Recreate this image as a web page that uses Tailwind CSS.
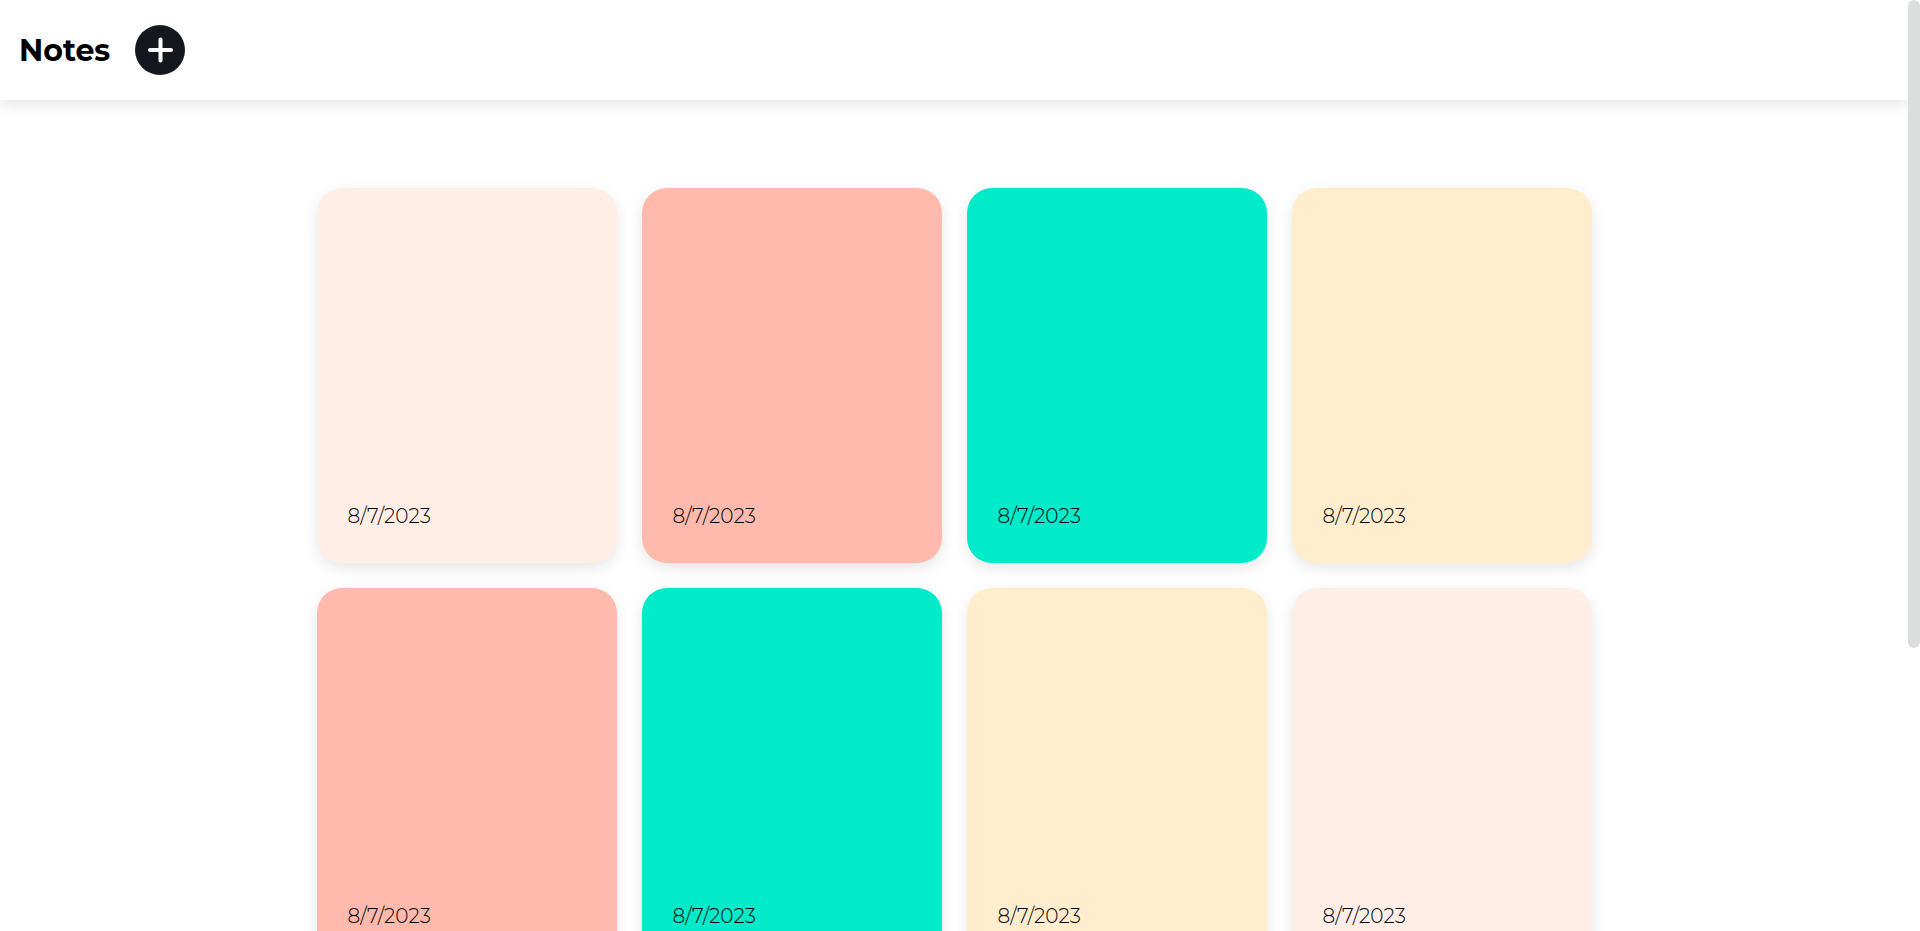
<!DOCTYPE html>
<html lang="en">
<head>
<meta charset="utf-8">
<meta name="viewport" content="width=device-width, initial-scale=1">
<title>Notes</title>
<script src="https://cdn.jsdelivr.net/npm/@tailwindcss/browser@4"></script>
</head>
<body class="flex h-screen overflow-hidden bg-white font-['Montserrat','Inter',sans-serif] text-black">
  <div class="flex min-w-0 flex-1 flex-col overflow-hidden">
    <header class="flex shrink-0 items-center gap-[25px] bg-white px-[19px] py-6 shadow-[0_5px_15px_rgba(0,0,0,0.1)]">
      <h1 class="pt-0.5 text-[30px] leading-[50px] font-bold">Notes</h1>
      <button type="button" aria-label="Add note" class="size-[50px] rounded-full bg-[#15171e]">
        <svg viewBox="0 0 50 50" class="size-full" fill="none" stroke="#fff" stroke-width="4" stroke-linecap="round" aria-hidden="true"><path d="M25.500 14.500V35.500M15 25H36"/></svg>
      </button>
    </header>
    <main class="mx-auto flex w-full max-w-[1400px] flex-wrap justify-center gap-[25px] px-5 pt-[88px]">
      <article class="flex h-[375px] w-[300px] items-end rounded-[25px] bg-[#ffeee6] px-[31px] pb-[35px] shadow-[0_5px_15px_rgba(0,0,0,0.1)]"><time datetime="2023-08-07" class="text-[20px] leading-6 font-light">8/7/2023</time></article>
      <article class="flex h-[375px] w-[300px] items-end rounded-[25px] bg-[#ffb9ad] px-[31px] pb-[35px] shadow-[0_5px_15px_rgba(0,0,0,0.1)]"><time datetime="2023-08-07" class="text-[20px] leading-6 font-light">8/7/2023</time></article>
      <article class="flex h-[375px] w-[300px] items-end rounded-[25px] bg-[#00ebca] px-[31px] pb-[35px] shadow-[0_5px_15px_rgba(0,0,0,0.1)]"><time datetime="2023-08-07" class="text-[20px] leading-6 font-light">8/7/2023</time></article>
      <article class="flex h-[375px] w-[300px] items-end rounded-[25px] bg-[#ffedce] px-[31px] pb-[35px] shadow-[0_5px_15px_rgba(0,0,0,0.1)]"><time datetime="2023-08-07" class="text-[20px] leading-6 font-light">8/7/2023</time></article>
      <article class="flex h-[375px] w-[300px] items-end rounded-[25px] bg-[#ffb9ad] px-[31px] pb-[35px] shadow-[0_5px_15px_rgba(0,0,0,0.1)]"><time datetime="2023-08-07" class="text-[20px] leading-6 font-light">8/7/2023</time></article>
      <article class="flex h-[375px] w-[300px] items-end rounded-[25px] bg-[#00ebca] px-[31px] pb-[35px] shadow-[0_5px_15px_rgba(0,0,0,0.1)]"><time datetime="2023-08-07" class="text-[20px] leading-6 font-light">8/7/2023</time></article>
      <article class="flex h-[375px] w-[300px] items-end rounded-[25px] bg-[#ffedce] px-[31px] pb-[35px] shadow-[0_5px_15px_rgba(0,0,0,0.1)]"><time datetime="2023-08-07" class="text-[20px] leading-6 font-light">8/7/2023</time></article>
      <article class="flex h-[375px] w-[300px] items-end rounded-[25px] bg-[#ffeee6] px-[31px] pb-[35px] shadow-[0_5px_15px_rgba(0,0,0,0.1)]"><time datetime="2023-08-07" class="text-[20px] leading-6 font-light">8/7/2023</time></article>
    </main>
  </div>
  <div class="w-3 shrink-0" aria-hidden="true">
    <div class="h-[648px] rounded-full bg-[#dbdedd]"></div>
  </div>
</body>
</html>
